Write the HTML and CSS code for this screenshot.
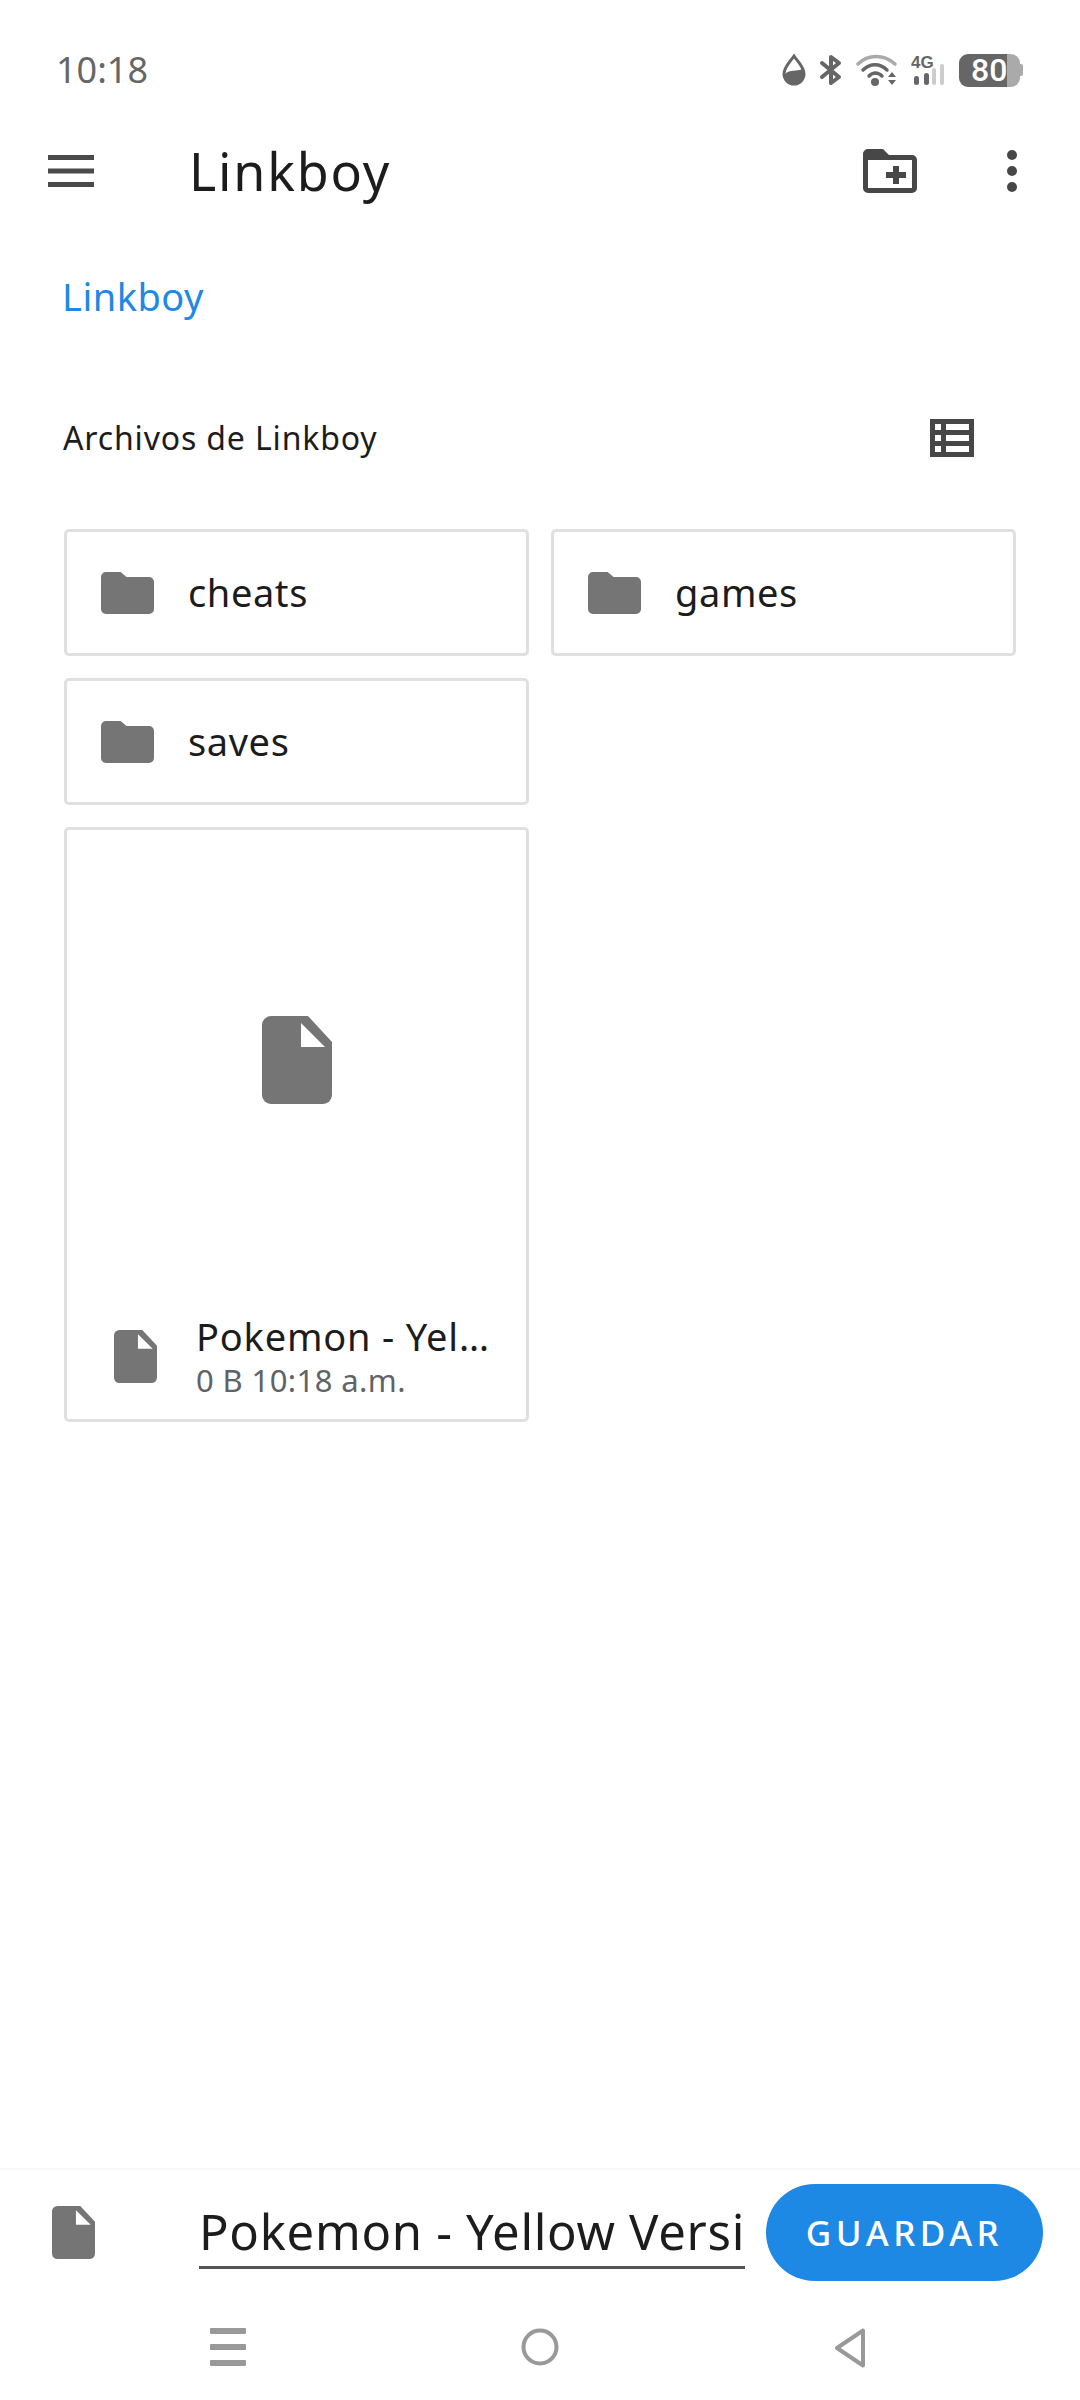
FILE: index.html
```html
<!DOCTYPE html>
<html>
<head>
  <meta charset="UTF-8">
  <title>Linkboy</title>
  <link rel="stylesheet" href="styles.css">
</head>
<body>
  <div class="status">
    <span class="time">10:18</span>
    <div class="status-icons">
      <svg width="24" height="32" viewBox="0 0 24 32"><path d="M12 2 C8 8 2 13 2 20 a10 10 0 0 0 20 0 C22 13 16 8 12 2Z" fill="none" stroke="#666" stroke-width="3"/><path d="M3 20 C8 15 14 18 21 15 C23 22 19 30 12 30 C6 30 2 26 3 20Z" fill="#666"/></svg>
      <svg width="24" height="32" viewBox="0 0 24 32"><path d="M3 9 L20 23 L12 29 V3 L20 9 L3 23" fill="none" stroke="#666" stroke-width="4" stroke-linejoin="round" stroke-linecap="round"/></svg>
      <svg width="42" height="32" viewBox="0 0 42 32"><path d="M2 10 C12 0 28 0 39 10" fill="none" stroke="#aaa" stroke-width="3.5" stroke-linecap="round"/><path d="M7 16 C14 9 24 9 31 16 M13 22 C17 18 22 18 26 22" fill="none" stroke="#666" stroke-width="3.5" stroke-linecap="round"/><circle cx="19" cy="28" r="4" fill="#666"/><path d="M32 23 L36 18 L40 23Z M32 26 L40 26 L36 31Z" fill="#666"/></svg>
      <svg width="34" height="32" viewBox="0 0 34 32"><text x="0" y="14" class="net-label">4G</text><rect x="3" y="22" width="5" height="9" rx="2.5" fill="#666"/><rect x="13" y="19" width="5" height="12" rx="2.5" fill="#666"/><rect x="21" y="14" width="4" height="17" rx="2" fill="#ccc"/><rect x="29" y="10" width="4" height="21" rx="2" fill="#ccc"/></svg>
      <div class="battery">
        <div class="battery-body"><span>80</span></div>
        <div class="battery-cap"></div>
      </div>
    </div>
  </div>

  <div class="toolbar">
    <svg class="menu-icon" width="46" height="32" viewBox="0 0 46 32"><path d="M0 0h46v5H0zM0 13.500h46v5H0zM0 27h46v5H0z" fill="#4a4a4a"/></svg>
    <h1>Linkboy</h1>
    <svg class="new-folder" width="54" height="44" viewBox="0 0 54 44"><path d="M5 0h15l6 6h23a5 5 0 0 1 5 5v28a5 5 0 0 1-5 5H5a5 5 0 0 1-5-5V5a5 5 0 0 1 5-5Z M5 11v28h44V11Z" fill="#474747" fill-rule="evenodd"/><path d="M30 17h6v6h7v6h-7v6h-6v-6h-7v-6h7z" fill="#474747"/></svg>
    <svg class="more" width="10" height="42" viewBox="0 0 10 42"><circle cx="5" cy="5" r="5" fill="#474747"/><circle cx="5" cy="21" r="5" fill="#474747"/><circle cx="5" cy="37" r="5" fill="#474747"/></svg>
  </div>

  <div class="main">
    <div class="crumb">Linkboy</div>
    <div class="section-head">
      <span>Archivos de Linkboy</span>
      <svg width="44" height="38" viewBox="0 0 44 38"><path d="M0 0h44v38H0z M5 5v6h6V5z M16 5v6h23V5z M5 16v6h6v-6z M16 16v6h23v-6z M5 27v6h6v-6z M16 27v6h23v-6z" fill="#474747" fill-rule="evenodd"/></svg>
    </div>

    <div class="grid">
      <div class="card folder">
        <svg width="53" height="42" viewBox="0 0 54 42" preserveAspectRatio="none"><path d="M5 0h15l6 5h23a5 5 0 0 1 5 5v27a5 5 0 0 1-5 5H5a5 5 0 0 1-5-5V5a5 5 0 0 1 5-5Z" fill="#757575"/></svg>
        <span>cheats</span>
      </div>
      <div class="card folder">
        <svg width="53" height="42" viewBox="0 0 54 42" preserveAspectRatio="none"><path d="M5 0h15l6 5h23a5 5 0 0 1 5 5v27a5 5 0 0 1-5 5H5a5 5 0 0 1-5-5V5a5 5 0 0 1 5-5Z" fill="#757575"/></svg>
        <span>games</span>
      </div>
      <div class="card folder">
        <svg width="53" height="42" viewBox="0 0 54 42" preserveAspectRatio="none"><path d="M5 0h15l6 5h23a5 5 0 0 1 5 5v27a5 5 0 0 1-5 5H5a5 5 0 0 1-5-5V5a5 5 0 0 1 5-5Z" fill="#757575"/></svg>
        <span>saves</span>
      </div>
      <div class="card file">
        <div class="thumb">
          <svg width="70" height="88" viewBox="0 0 70 88"><path d="M9 0h37l24 26v53a9 9 0 0 1-9 9H9a9 9 0 0 1-9-9V9a9 9 0 0 1 9-9Z" fill="#757575"/><path d="M39 7v24h24Z" fill="#fff"/></svg>
        </div>
        <div class="file-info">
          <svg width="43" height="53" viewBox="0 0 70 88" preserveAspectRatio="none"><path d="M9 0h37l24 26v53a9 9 0 0 1-9 9H9a9 9 0 0 1-9-9V9a9 9 0 0 1 9-9Z" fill="#757575"/><path d="M39 7v24h24Z" fill="#fff"/></svg>
          <div class="file-text">
            <div class="file-name">Pokemon - Yel…</div>
            <div class="file-meta">0 B 10:18 a.m.</div>
          </div>
        </div>
      </div>
    </div>
  </div>

  <div class="save-bar">
    <svg width="43" height="53" viewBox="0 0 70 88" preserveAspectRatio="none"><path d="M9 0h37l24 26v53a9 9 0 0 1-9 9H9a9 9 0 0 1-9-9V9a9 9 0 0 1 9-9Z" fill="#757575"/><path d="M39 7v24h24Z" fill="#fff"/></svg>
    <div class="name-field">Pokemon - Yellow Versi</div>
    <button class="save">GUARDAR</button>
  </div>

  <div class="navbar">
    <svg width="36" height="38" viewBox="0 0 36 38"><path d="M0 1a1 1 0 0 1 1-1h34a1 1 0 0 1 1 1v4a1 1 0 0 1-1 1H1a1 1 0 0 1-1-1zM0 17a1 1 0 0 1 1-1h34a1 1 0 0 1 1 1v5H0zM0 33a1 1 0 0 1 1-1h34a1 1 0 0 1 1 1v4a1 1 0 0 1-1 1H1a1 1 0 0 1-1-1z" fill="#999"/></svg>
    <svg width="38" height="38" viewBox="0 0 38 38"><circle cx="19" cy="19" r="16.500" fill="none" stroke="#999" stroke-width="4"/></svg>
    <svg width="32" height="40" viewBox="0 0 32 40"><path d="M29 2.500 V37.500 L3 20Z" fill="none" stroke="#999" stroke-width="4" stroke-linejoin="round"/></svg>
  </div>
</body>
</html>
```

FILE: styles.css
```css
body {margin:0;width:1080px;height:2400px;display:flex;flex-direction:column;background:#fff;font-family:"Noto Sans",sans-serif;color:#1c1c1c;}

.status {height:100px;flex:none;display:flex;align-items:center;justify-content:space-between;padding:40px 57px 0 56px;box-sizing:border-box;}
.time {font-size:36px;color:#666;line-height:40px;}
.status-icons {display:flex;align-items:center;gap:13px;}
.net-label {font-family:"Liberation Sans",sans-serif;font-size:17px;font-weight:700;fill:#666;}
.battery {display:flex;align-items:center;margin-left:1px;}
.battery-body {width:61px;height:33px;border-radius:9px;background:linear-gradient(90deg,#666 48px,#aaa 48px);display:flex;align-items:center;justify-content:flex-start;padding-left:12px;box-sizing:border-box;}
.battery-body span {color:#fff;font-size:32px;font-weight:500;font-family:"Roboto",sans-serif;line-height:33px;}
.battery-cap {width:3px;height:12px;background:#aaa;border-radius:0 2px 2px 0;}

.toolbar {height:142px;flex:none;display:flex;align-items:center;padding:0 63px 0 48px;box-sizing:border-box;}
.toolbar h1 {font-size:52px;font-weight:400;letter-spacing:1.8px;margin:0 0 2px 95px;flex:1;color:#1c1c1c;}
.new-folder {margin-right:90px;}

.main {flex:1;padding:0 64px;}
.crumb {color:#1e88e5;font-size:38px;letter-spacing:.5px;margin:28px 0 0 -2px;line-height:52px;}
.section-head {display:flex;align-items:center;justify-content:space-between;margin:96px 0 0 -1px;padding-right:42px;font-size:32px;letter-spacing:.85px;line-height:40px;height:40px;}

.grid {display:grid;grid-template-columns:465px 465px;column-gap:22px;row-gap:22px;margin-top:71px;align-items:start;}
.card {border:3px solid #e0e0e0;border-radius:5px;box-sizing:border-box;background:#fff;}
.folder {height:127px;display:flex;align-items:center;padding-left:34px;gap:34px;font-size:38px;letter-spacing:.6px;}
.folder span {padding-bottom:2px;}
.file {grid-column:1;height:595px;display:flex;flex-direction:column;}
.thumb {height:459px;display:flex;align-items:center;justify-content:center;}
.file-info {display:flex;align-items:center;padding-left:47px;gap:39px;margin-top:23px;}
.file-name {font-size:38px;letter-spacing:.8px;line-height:48px;white-space:nowrap;}
.file-meta {font-size:31px;letter-spacing:.4px;color:#5f6368;line-height:40px;}

.save-bar {height:127px;flex:none;border-top:2px solid #f7f7f7;display:flex;align-items:center;box-sizing:border-box;padding:0 37px 0 52px;}
.name-field {width:546px;margin-left:104px;font-size:49px;letter-spacing:.7px;line-height:64px;border-bottom:3px solid #555;white-space:nowrap;box-sizing:border-box;height:72px;padding-top:2px;}
.save {margin-left:21px;width:277px;height:97px;border:0;border-radius:49px;background:#1e88e5;color:#fff;font-family:inherit;font-size:35px;font-weight:500;letter-spacing:4.5px;}

.navbar {height:105px;flex:none;display:flex;align-items:flex-start;box-sizing:border-box;padding:33px 0 0 210px;gap:275px;}
```
